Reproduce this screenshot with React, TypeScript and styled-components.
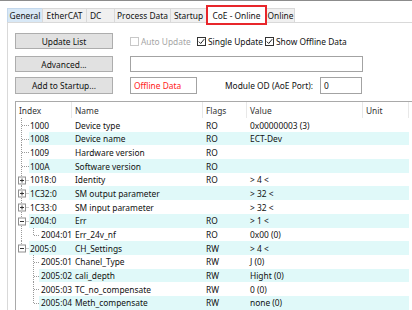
import React from 'react';
import styled, { createGlobalStyle } from 'styled-components';

const GlobalStyle = createGlobalStyle`
  html, body {
    margin: 0;
    padding: 0;
    background: #ffffff;
  }
  body {
    font-family: "Noto Sans", "Liberation Sans", Arial, sans-serif;
    font-size: 8.4px;
    color: #111111;
    overflow: hidden;
  }
`;

const ROW_H = 13.7;
const HILITE = '#e0f9f9';
const LINE = '#9a9a9a';

const Window = styled.div`
  width: 412px;
  height: 310px;
  border-top: 1px solid #8c8c8c;
  box-sizing: border-box;
  display: flex;
  flex-direction: column;
  overflow: hidden;
`;

const TabStrip = styled.div`
  display: flex;
  align-items: flex-end;
  height: 14px;
  margin-top: 7px;
  padding-left: 7px;
`;

const Tab = styled.div<{ $w: number; $hover?: boolean; $left?: boolean }>`
  box-sizing: border-box;
  width: ${(p) => p.$w}px;
  height: 14px;
  line-height: 13px;
  padding-left: ${(p) => (p.$left ? '3px' : '0')};
  text-align: ${(p) => (p.$left ? 'left' : 'center')};
  background: ${(p) => (p.$hover ? '#d8e8f6' : '#f0f0f0')};
  border: 1px solid ${(p) => (p.$hover ? '#c4d8ec' : '#d9d9d9')};
  border-bottom: none;
  margin-right: -1px;
  white-space: nowrap;
`;

const ActiveTab = styled.div`
  position: relative;
  z-index: 1;
  box-sizing: border-box;
  width: 61px;
  height: 20px;
  margin-bottom: -3px;
  margin-right: -1px;
  padding-top: 2px;
  text-align: center;
  line-height: 13px;
  background: #ffffff;
  border: 2px solid #e8262b;
  white-space: nowrap;
`;

const Panel = styled.div`
  flex: 1;
  display: flex;
  flex-direction: column;
  margin-left: 7px;
  border-top: 1px solid #d9d9d9;
  border-left: 1px solid #d9d9d9;
  background: #ffffff;
`;

const Controls = styled.div`
  display: flex;
  flex-direction: column;
  padding: 10px 0 0 7px;
`;

const ControlRow = styled.div<{ $h: number; $gap: number }>`
  display: flex;
  align-items: center;
  height: ${(p) => p.$h}px;
  margin-top: ${(p) => p.$gap}px;
`;

const Button = styled.div`
  box-sizing: border-box;
  width: 98px;
  height: 100%;
  margin-right: 17px;
  display: flex;
  align-items: center;
  justify-content: center;
  background: #e1e1e1;
  border: 1px solid #adadad;
`;

const CheckItem = styled.label<{ $w: number; $disabled?: boolean }>`
  display: flex;
  align-items: center;
  gap: 2px;
  width: ${(p) => p.$w}px;
  color: ${(p) => (p.$disabled ? '#a6a6a6' : '#111111')};
  white-space: nowrap;
`;

const Box = styled.span<{ $disabled?: boolean }>`
  box-sizing: border-box;
  width: 9px;
  height: 9px;
  border: 1px solid ${(p) => (p.$disabled ? '#c8c8c8' : '#333333')};
  background: #ffffff;
  display: flex;
  align-items: center;
  justify-content: center;
`;

const TextField = styled.div<{ $w: number; $red?: boolean }>`
  box-sizing: border-box;
  width: ${(p) => p.$w}px;
  height: 100%;
  border: 1px solid #a3a3a3;
  background: #ffffff;
  padding-left: 3px;
  display: flex;
  align-items: center;
  color: ${(p) => (p.$red ? '#ff1a1a' : '#111111')};
`;

const FieldLabel = styled.span`
  margin-left: 28px;
  width: 95px;
  white-space: nowrap;
`;

const Table = styled.div`
  margin: 7px 0 0 7px;
  flex: 1;
  border-top: 1px solid #a9a9a9;
  border-left: 1px solid #a9a9a9;
  display: flex;
  flex-direction: column;
`;

const COLS = '56px 131px 44px 116px 46px 1fr';

const HeaderRow = styled.div`
  display: grid;
  grid-template-columns: ${COLS};
  height: 16px;
  color: #333333;
`;

const HeaderCell = styled.div`
  display: flex;
  align-items: center;
  padding-left: 3px;
  border-right: 1px solid #e8e8e8;
`;

const Row = styled.div<{ $alt: boolean; $from: number }>`
  display: grid;
  grid-template-columns: ${COLS};
  height: ${ROW_H}px;
  background: ${(p) =>
    p.$alt
      ? `linear-gradient(to right, transparent ${p.$from}px, ${HILITE} ${p.$from}px, ${HILITE} 393px, transparent 393px)`
      : 'none'};
`;

const IndexCell = styled.div`
  display: flex;
  align-items: center;
  white-space: nowrap;
`;

const Cell = styled.div`
  display: flex;
  align-items: center;
  padding-left: 3px;
  white-space: nowrap;
`;

type Node = {
  index: string;
  name: string;
  flags: string;
  value: string;
  level: 0 | 1;
  expander?: 'plus' | 'minus';
  lastChild?: boolean;
  rootThrough?: boolean;
  lastRoot?: boolean;
};

const rows: Node[] = [
  { index: '1000', name: 'Device type', flags: 'RO', value: '0x00000003 (3)', level: 0 },
  { index: '1008', name: 'Device name', flags: 'RO', value: 'ECT-Dev', level: 0 },
  { index: '1009', name: 'Hardware version', flags: 'RO', value: '', level: 0 },
  { index: '100A', name: 'Software version', flags: 'RO', value: '', level: 0 },
  { index: '1018:0', name: 'Identity', flags: 'RO', value: '> 4 <', level: 0, expander: 'plus' },
  { index: '1C32:0', name: 'SM output parameter', flags: '', value: '> 32 <', level: 0, expander: 'plus' },
  { index: '1C33:0', name: 'SM input parameter', flags: '', value: '> 32 <', level: 0, expander: 'plus' },
  { index: '2004:0', name: 'Err', flags: 'RO', value: '> 1 <', level: 0, expander: 'minus' },
  { index: '2004:01', name: 'Err_24v_nf', flags: 'RO', value: '0x00 (0)', level: 1, lastChild: true, rootThrough: true },
  { index: '2005:0', name: 'CH_Settings', flags: 'RW', value: '> 4 <', level: 0, expander: 'minus', lastRoot: true },
  { index: '2005:01', name: 'Chanel_Type', flags: 'RW', value: 'J (0)', level: 1 },
  { index: '2005:02', name: 'cali_depth', flags: 'RW', value: 'Hight (0)', level: 1 },
  { index: '2005:03', name: 'TC_no_compensate', flags: 'RW', value: '0 (0)', level: 1 },
  { index: '2005:04', name: 'Meth_compensate', flags: 'RW', value: 'none (0)', level: 1, lastChild: true },
];

const TreeLines: React.FC<{ node: Node }> = ({ node }) => {
  const h = 14;
  const mid = 7.5;
  const w = node.level === 0 ? 14 : 25;
  const dash = { stroke: LINE, strokeWidth: 1, strokeDasharray: '1 1', fill: 'none' };
  const parts: React.ReactNode[] = [];
  if (node.level === 0) {
    parts.push(<line key="v" x1={5.5} y1={0} x2={5.5} y2={node.lastRoot ? mid : h} {...dash} />);
    parts.push(<line key="h" x1={node.expander ? 9.5 : 6} y1={mid} x2={13} y2={mid} {...dash} />);
    if (node.expander) {
      parts.push(
        <g key="b">
          <rect x={2.5} y={mid - 3.5} width={7} height={7} fill="#fff" stroke="#8f8f8f" />
          <line x1={4} y1={mid} x2={8} y2={mid} stroke="#333" />
          {node.expander === 'plus' && <line x1={6} y1={mid - 2} x2={6} y2={mid + 2} stroke="#333" />}
        </g>
      );
    }
  } else {
    if (node.rootThrough) parts.push(<line key="r" x1={5.5} y1={0} x2={5.5} y2={h} {...dash} />);
    parts.push(<line key="v" x1={17.5} y1={0} x2={17.5} y2={node.lastChild ? mid : h} {...dash} />);
    parts.push(<line key="h" x1={18} y1={mid} x2={23} y2={mid} {...dash} />);
  }
  return (
    <svg width={w} height={h} viewBox={`0 0 ${w} ${h}`} style={{ flex: 'none' }}>
      {parts}
    </svg>
  );
};

const Check: React.FC<{ checked?: boolean; disabled?: boolean }> = ({ checked, disabled }) => (
  <Box $disabled={disabled}>
    {checked && (
      <svg width="7" height="7" viewBox="0 0 7 7">
        <polyline points="0.8,3.6 2.7,5.5 6.2,1.2" fill="none" stroke="#222" strokeWidth="1" />
      </svg>
    )}
  </Box>
);

const tabs = [
  { label: 'General', w: 36, hover: true },
  { label: 'EtherCAT', w: 45 },
  { label: 'DC', w: 29, left: true },
  { label: 'Process Data', w: 57 },
  { label: 'Startup', w: 37 },
];

export default function App() {
  return (
    <>
      <GlobalStyle />
      <Window>
        <TabStrip>
          {tabs.map((t) => (
            <Tab key={t.label} $w={t.w} $hover={t.hover} $left={t.left}>
              {t.label}
            </Tab>
          ))}
          <ActiveTab>CoE - Online</ActiveTab>
          <Tab $w={29}>Online</Tab>
        </TabStrip>
        <Panel>
          <Controls>
            <ControlRow $h={16} $gap={0}>
              <Button>Update List</Button>
              <CheckItem $w={67} $disabled>
                <Check disabled />
                Auto Update
              </CheckItem>
              <CheckItem $w={68}>
                <Check checked />
                Single Update
              </CheckItem>
              <CheckItem $w={90}>
                <Check checked />
                Show Offline Data
              </CheckItem>
            </ControlRow>
            <ControlRow $h={16} $gap={7}>
              <Button>Advanced...</Button>
              <TextField $w={233} />
            </ControlRow>
            <ControlRow $h={17} $gap={5}>
              <Button>Add to Startup...</Button>
              <TextField $w={67} $red>
                Offline Data
              </TextField>
              <FieldLabel>Module OD (AoE Port):</FieldLabel>
              <TextField $w={42}>0</TextField>
            </ControlRow>
          </Controls>
          <Table>
            <HeaderRow>
              <HeaderCell>Index</HeaderCell>
              <HeaderCell>Name</HeaderCell>
              <HeaderCell>Flags</HeaderCell>
              <HeaderCell>Value</HeaderCell>
              <HeaderCell>Unit</HeaderCell>
              <HeaderCell />
            </HeaderRow>
            {rows.map((r, i) => (
              <Row key={r.index} $alt={i % 2 === 1} $from={r.level === 0 ? 13 : 23}>
                <IndexCell>
                  <TreeLines node={r} />
                  {r.index}
                </IndexCell>
                <Cell>{r.name}</Cell>
                <Cell>{r.flags}</Cell>
                <Cell>{r.value}</Cell>
                <Cell />
                <Cell />
              </Row>
            ))}
          </Table>
        </Panel>
      </Window>
    </>
  );
}
